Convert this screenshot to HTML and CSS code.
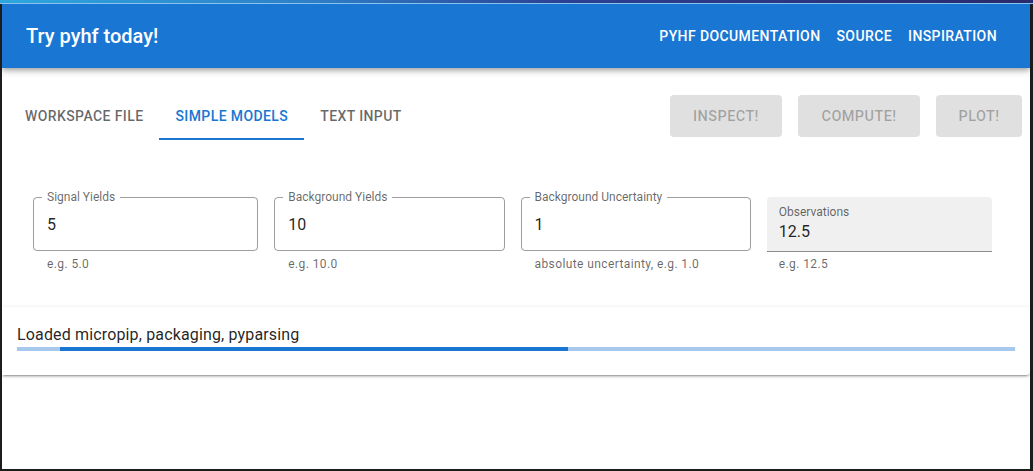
FILE: index.html
```html
<!DOCTYPE html>
<html lang="en">
<head>
<meta charset="utf-8">
<title>Try pyhf today!</title>
<link rel="stylesheet" href="styles.css">
</head>
<body>
<div class="screen">
  <div class="topstrip"></div>
  <div class="window">
    <header class="appbar">
      <div class="app-title">Try pyhf today!</div>
      <nav class="nav">
        <a class="nav-link">PYHF DOCUMENTATION</a>
        <a class="nav-link">SOURCE</a>
        <a class="nav-link">INSPIRATION</a>
      </nav>
    </header>
    <main class="main">
      <div class="toolbar">
        <div class="tabs">
          <div class="tab">Workspace File</div>
          <div class="tab tab-active">Simple Models</div>
          <div class="tab">Text Input</div>
        </div>
        <div class="actions">
          <button class="btn btn-inspect" disabled>Inspect!</button>
          <button class="btn btn-compute" disabled>Compute!</button>
          <button class="btn btn-plot" disabled>Plot!</button>
        </div>
      </div>
      <div class="fields">
        <div class="field">
          <fieldset class="outlined">
            <legend class="outlined-label">Signal Yields</legend>
            <input class="field-input" value="5">
          </fieldset>
          <div class="hint">e.g. 5.0</div>
        </div>
        <div class="field field-wide">
          <fieldset class="outlined">
            <legend class="outlined-label">Background Yields</legend>
            <input class="field-input" value="10">
          </fieldset>
          <div class="hint">e.g. 10.0</div>
        </div>
        <div class="field field-wide">
          <fieldset class="outlined">
            <legend class="outlined-label">Background Uncertainty</legend>
            <input class="field-input" value="1">
          </fieldset>
          <div class="hint">absolute uncertainty, e.g. 1.0</div>
        </div>
        <div class="field">
          <div class="filled">
            <div class="filled-label">Observations</div>
            <input class="field-input filled-input" value="12.5">
          </div>
          <div class="hint hint-filled">e.g. 12.5</div>
        </div>
      </div>
      <section class="status-card">
        <div class="status-text">Loaded micropip, packaging, pyparsing</div>
        <div class="progress"><div class="progress-fill"></div></div>
      </section>
    </main>
  </div>
</div>
</body>
</html>
```

FILE: styles.css
```css
* { box-sizing: border-box; }

html, body {
  margin: 0;
  padding: 0;
  height: 471px;
  overflow: hidden;
  background: #1c1c1c;
  font-family: Roboto, "Noto Sans", "Liberation Sans", sans-serif;
}

.screen {
  display: flex;
  flex-direction: column;
  height: 471px;
}

.topstrip {
  height: 4px;
  flex: none;
  background: linear-gradient(90deg, #2ea6de 0%, #2f7fc8 30%, #2d3f92 55%, #2a2a6c 100%);
  border-bottom: 1px solid #86c4ee;
}

.window {
  flex: 1;
  margin: 0 3px 2px 2px;
  background: #ffffff;
  display: flex;
  flex-direction: column;
  overflow: hidden;
}

/* App bar */
.appbar {
  height: 64px;
  flex: none;
  background: #1976d2;
  color: #ffffff;
  display: flex;
  align-items: center;
  justify-content: space-between;
  padding: 0 25px 0 24px;
  position: relative;
  z-index: 2;
  box-shadow: 0 2px 4px -1px rgba(0,0,0,.2), 0 4px 5px 0 rgba(0,0,0,.14), 0 1px 10px 0 rgba(0,0,0,.12);
}

.app-title {
  font-size: 20px;
  font-weight: 500;
  line-height: 24px;
}

.nav {
  display: flex;
  align-items: center;
}

.nav-link {
  padding: 0 8px;
  font-size: 14px;
  font-weight: 500;
  letter-spacing: 0.4px;
  line-height: 36px;
  color: #ffffff;
}

/* Main area */
.main {
  flex: 1;
  display: flex;
  flex-direction: column;
}

.toolbar {
  display: flex;
  align-items: center;
  justify-content: space-between;
  margin-top: 24px;
  padding: 0 8px 0 7px;
}

.tabs {
  display: flex;
  height: 48px;
}

.tab {
  display: flex;
  align-items: center;
  justify-content: center;
  min-width: 90px;
  padding: 2px 16px 0;
  font-size: 14px;
  font-weight: 500;
  letter-spacing: 0.4px;
  text-transform: uppercase;
  color: rgba(0,0,0,.6);
  border-bottom: 2px solid transparent;
}

.tab-active {
  color: #1976d2;
  border-bottom-color: #1976d2;
}

.actions {
  display: flex;
  gap: 16px;
}

.btn {
  height: 42px;
  border: none;
  border-radius: 4px;
  background: #e0e0e0;
  color: rgba(0,0,0,.28);
  font-family: inherit;
  font-size: 14.5px;
  font-weight: 500;
  letter-spacing: 0.4px;
  text-transform: uppercase;
  padding: 0;
}

.btn-inspect { width: 112px; }
.btn-compute { width: 122px; }
.btn-plot { width: 86px; }

/* Fields */
.fields {
  display: flex;
  gap: 16px;
  padding: 0 38px 0 31px;
  margin-top: 50px;
}

.field {
  flex: 225 1 0;
  display: flex;
  flex-direction: column;
}

.field-wide {
  flex: 230 1 0;
}

.outlined {
  margin: 0;
  padding: 11px 0 0 13px;
  height: 61px;
  border: 1px solid rgba(0,0,0,.38);
  border-radius: 4px;
}

.outlined-label {
  margin-left: -5px;
  padding: 0 5px;
  font-size: 12px;
  line-height: 14px;
  color: rgba(0,0,0,.6);
}

.field-input {
  display: block;
  width: 100%;
  border: none;
  outline: none;
  background: transparent;
  padding: 0;
  font-family: inherit;
  font-size: 16px;
  line-height: 20px;
  height: 20px;
  color: rgba(0,0,0,.87);
}

.hint {
  margin-top: 6px;
  padding-left: 14px;
  font-size: 12px;
  line-height: 14px;
  letter-spacing: 0.4px;
  color: rgba(0,0,0,.6);
}

.filled {
  margin-top: 7px;
  height: 55px;
  background: #f0f0f0;
  border-radius: 4px 4px 0 0;
  border-bottom: 1px solid rgba(0,0,0,.42);
  padding: 8px 12px 0 12px;
  display: flex;
  flex-direction: column;
}

.filled-label {
  font-size: 12px;
  line-height: 14px;
  color: rgba(0,0,0,.6);
}

.filled-input {
  margin-top: 3px;
}

.hint-filled {
  margin-top: 5px;
  padding-left: 12px;
}

/* Status card */
.status-card {
  margin-top: 36px;
  height: 68px;
  padding: 18px 15px 0 15px;
  border-radius: 0 4px 4px 0;
  background: #ffffff;
  box-shadow: 0 3px 1px -2px rgba(0,0,0,.2), 0 2px 2px 0 rgba(0,0,0,.14), 0 1px 5px 0 rgba(0,0,0,.12);
}

.status-text {
  font-size: 16px;
  line-height: 20px;
  letter-spacing: 0.15px;
  color: rgba(0,0,0,.87);
}

.progress {
  margin-top: 2px;
  height: 4px;
  background: #a6c9ed;
  display: flex;
}

.progress-fill {
  margin-left: 43px;
  width: 508px;
  background: #1976d2;
}
```
